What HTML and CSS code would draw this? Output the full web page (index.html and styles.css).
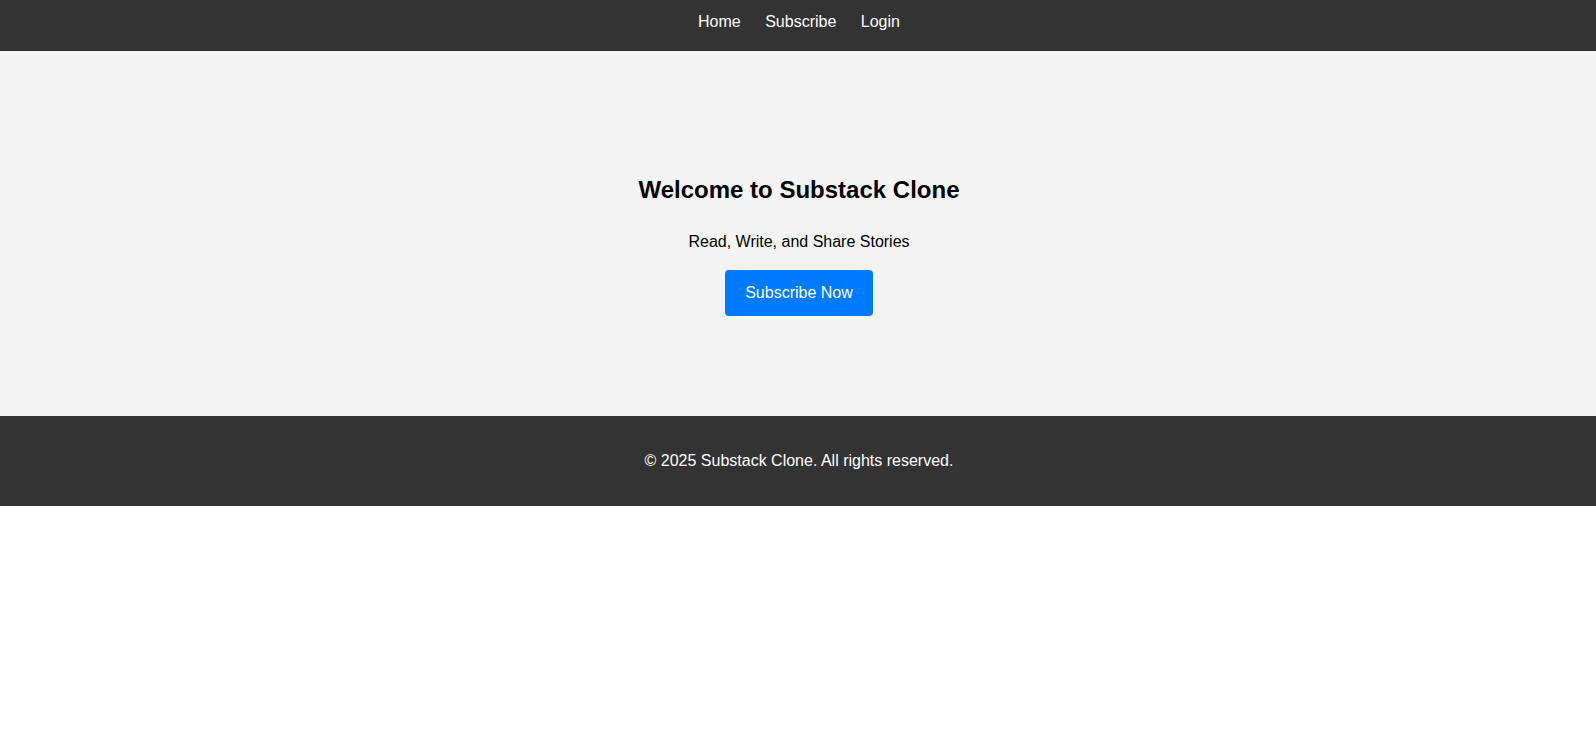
FILE: index.html
```html
<!DOCTYPE html>
<html lang="en">
<head>
<meta charset="utf-8">
<title>Substack Clone</title>
<link rel="stylesheet" href="styles.css">
</head>
<body>
<header class="site-header">
  <nav class="nav">
    <a href="#" class="nav-link">Home</a>
    <a href="#" class="nav-link">Subscribe</a>
    <a href="#" class="nav-link">Login</a>
  </nav>
</header>
<section class="hero">
  <h2 class="hero-title">Welcome to Substack Clone</h2>
  <p class="hero-text">Read, Write, and Share Stories</p>
  <button class="btn">Subscribe Now</button>
</section>
<footer class="site-footer">
  <p class="footer-text">&copy; 2025 Substack Clone. All rights reserved.</p>
</footer>
</body>
</html>
```
FILE: styles.css
```css
body {
  margin: 0;
  font-family: "Liberation Sans", Arial, sans-serif;
  font-size: 16px;
  color: #000;
  background: #fff;
}
.site-header {
  background: #333;
  padding: 12px 0 20px 2px;
  text-align: center;
  line-height: 19px;
}
.nav-link {
  color: #fff;
  text-decoration: none;
  margin: 0 10px;
}
.hero {
  background: #f4f4f4;
  text-align: center;
  padding: 125px 20px 100px 22px;
}
.hero-title {
  font-size: 24px;
  margin: 0;
}
.hero-text {
  margin: 29px 0 19px;
}
.btn {
  font-family: "Liberation Sans", Arial, sans-serif;
  font-size: 16px;
  color: #fff;
  background: #007bff;
  border: none;
  border-radius: 4px;
  padding: 14px 20px;
  cursor: pointer;
}
.site-footer {
  background: #333;
  color: #fff;
  text-align: center;
  padding: 20px 20px 20px 22px;
}
.footer-text {
  margin: 16px 0;
}
```
